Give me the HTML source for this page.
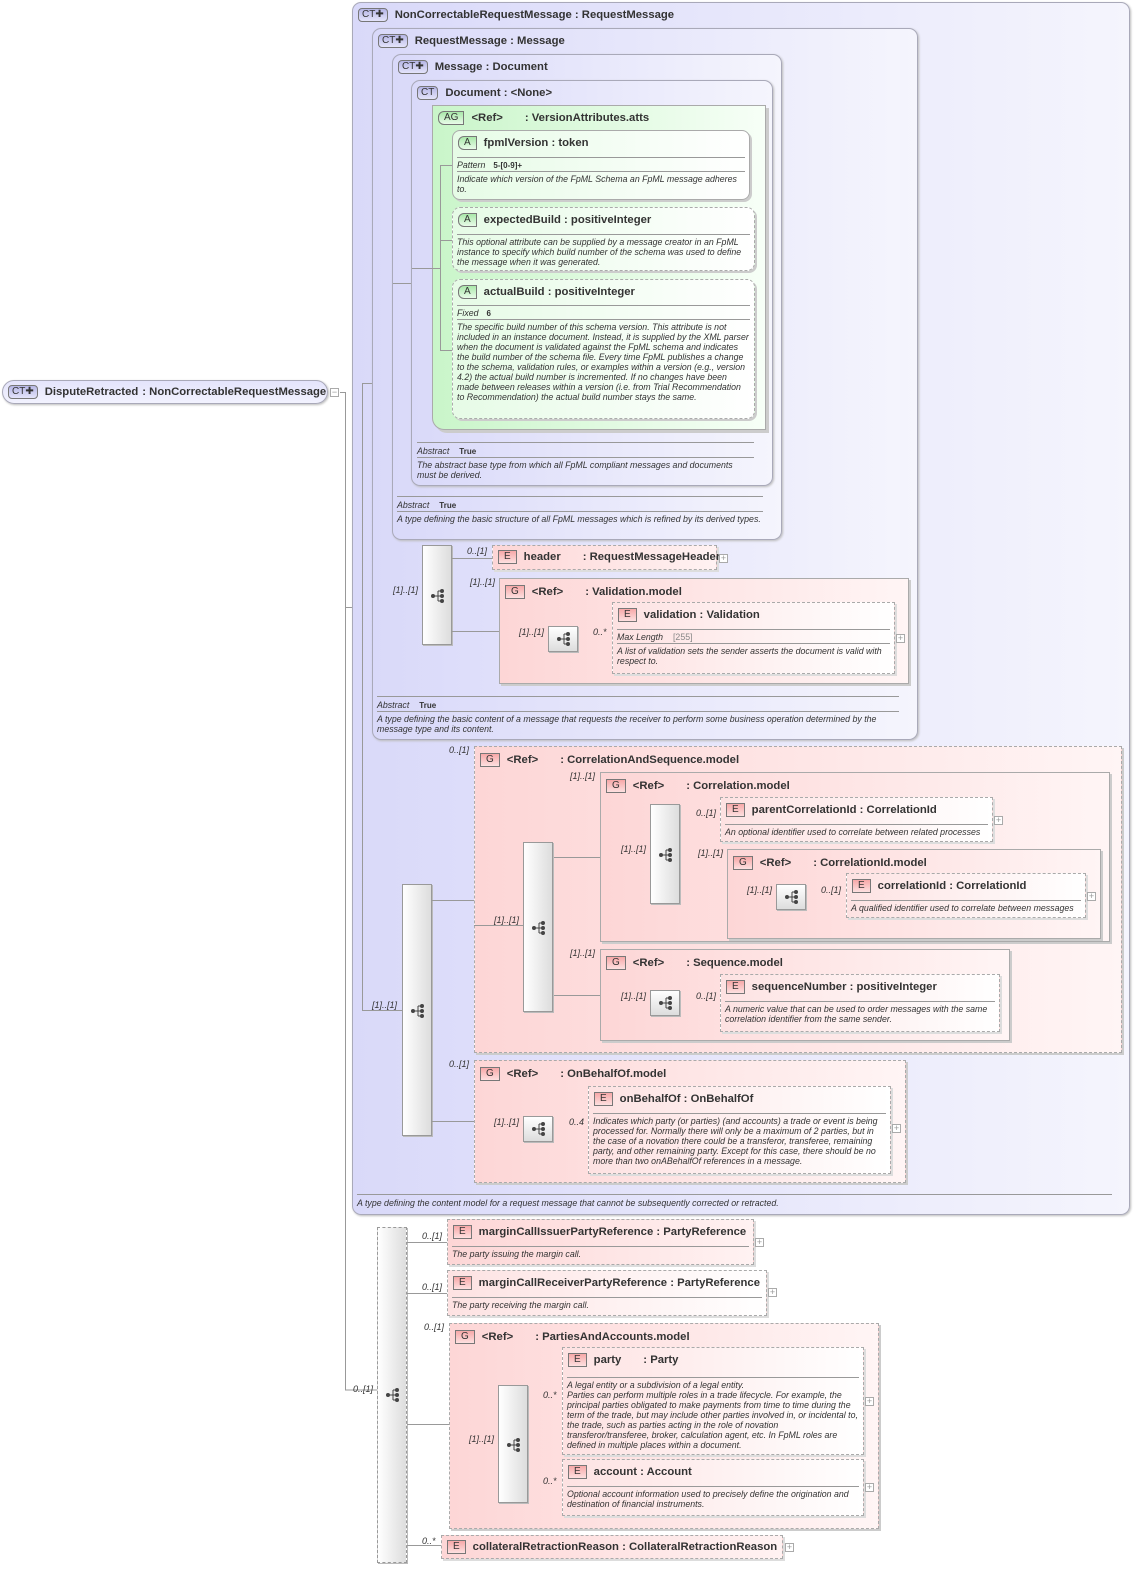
<!DOCTYPE html>
<html><head><meta charset="utf-8"><style>
body{margin:0;width:1139px;height:1575px;background:#fff;position:relative;overflow:hidden;font-family:"Liberation Sans",sans-serif;color:#222}
.b{position:absolute;box-sizing:border-box}
.ct{border:1px solid #a9a9b9;border-radius:9px;background:linear-gradient(90deg,#d9d9f9,#f5f5fd);box-shadow:1px 1px 2px #bbb}
.ag{border:1px solid #aaa;background:linear-gradient(90deg,#c9f5c9,#f7fff7);box-shadow:3px 3px 0 #ccc;border-radius:0 0 0 12px}
.at{border:1px solid #aaa;border-radius:8px;background:linear-gradient(90deg,#e6fbe6,#fff);box-shadow:2px 2px 0 #ccc}
.atd{border:1px dashed #aaa;border-radius:8px;background:linear-gradient(90deg,#e6fbe6,#fff);box-shadow:2px 2px 0 #ccc}
.g{border:1px solid #aaa;background:linear-gradient(90deg,#fdd6d6,#fff5f5);box-shadow:2px 2px 0 #ccc}
.gd{border:1px dashed #aaa;background:linear-gradient(90deg,#fdd6d6,#fff5f5);box-shadow:2px 2px 0 #ccc}
.e{border:1px dashed #aaa;background:linear-gradient(90deg,#fde2e2,#fff);box-shadow:2px 2px 0 #ddd}
.ef{border:1px dashed #aaa;background:linear-gradient(90deg,#fdd6d6,#fff2f2);box-shadow:2px 2px 0 #ddd}
.t{position:absolute;left:5px;top:4px;font-weight:bold;font-size:11.3px;white-space:nowrap;line-height:16px;color:#333}
.bg{display:inline-block;box-sizing:border-box;height:14px;line-height:12px;font-size:10px;font-weight:normal;padding:0 5px;margin-right:7px;vertical-align:middle;border:1px solid #777;background:linear-gradient(#f7a8a8,#fde0e0);color:#333}
.bg.c{border-radius:4px;background:linear-gradient(#b6b6e6,#e4e4fa);padding:0 3px}
.bg.a{border-radius:6px 0 0 6px;background:linear-gradient(#a9e8a9,#e8fbe8)}
.sec{position:absolute;left:4px;right:4px;border-top:1px solid #999;font-style:italic;font-size:8.8px;line-height:10px;padding-top:2px;color:#333}
.sec b{font-style:normal;font-size:8px;margin-left:8px}
.sec .gr{font-style:normal;color:#888;margin-left:10px}
.seq{position:absolute;box-sizing:border-box;border:1px solid #999;background:linear-gradient(90deg,#fff,#ddd);box-shadow:1px 1px 0 #bbb}
.sq{position:absolute;width:30px;height:26px;box-sizing:border-box;border:1px solid #999;background:linear-gradient(#fff,#ddd);box-shadow:1px 1px 0 #bbb}
.l{position:absolute;font-style:italic;font-size:9px;color:#333;white-space:nowrap}
.pl{position:absolute;width:9px;height:9px;box-sizing:border-box;border:1px solid #aaa;background:#fff;font-size:9px;line-height:7px;text-align:center;color:#999}
.ft{position:absolute;border-top:1px solid #999;font-style:italic;font-size:8.8px;line-height:10px;color:#333}
svg.ic{position:absolute}
</style></head><body>
<svg width="0" height="0" style="position:absolute"><defs><g id="si" fill="#444" stroke="#444"><circle cx="3" cy="7" r="2" stroke="none"/><path d="M3 7H8M8 2V12M8 2H12M8 7H12M8 12H12" fill="none" stroke-width="1"/><circle cx="12" cy="2" r="2" stroke="none"/><circle cx="12" cy="7" r="2" stroke="none"/><circle cx="12" cy="12" r="2" stroke="none"/></g></defs></svg>

<svg class="ic" width="1139" height="1575" style="left:0;top:0;z-index:0" fill="none" stroke="#999" stroke-width="1">
<path d="M340 392.5H345.5V1390H377M345 607.5H353"/>
</svg>

<div class="b ct" style="left:2px;top:380px;width:326px;height:24px;border-radius:12px;background:linear-gradient(#e4e4fc,#f2f2fe)"><div class="t" style="top:3px"><span class="bg c">CT✚</span>DisputeRetracted<span style="margin-left:4px">: NonCorrectableRequestMessage</span></div></div>
<div class="pl" style="left:330px;top:388px">−</div>

<div class="b ct" style="left:352px;top:2px;width:778px;height:1213px">
 <div class="t"><span class="bg c">CT✚</span>NonCorrectableRequestMessage : RequestMessage</div>
 <div class="ft" style="left:4px;width:755px;top:1191px;padding-top:3px">A type defining the content model for a request message that cannot be subsequently corrected or retracted.</div>
</div>
<svg class="ic" width="1139" height="1575" style="left:0;top:0" fill="none" stroke="#999">
<path d="M362.5 383V1010.5H402M362 383.5H372"/>
<path d="M380.5 283V595.5H422M380 283.5H392"/>
</svg>

<div class="b ct" style="left:372px;top:28px;width:546px;height:712px">
 <div class="t"><span class="bg c">CT✚</span>RequestMessage : Message</div>
 <div class="ft" style="left:4px;width:522px;top:667px;padding-top:3px"><span>Abstract</span><b style="font-style:normal;font-size:8px;margin-left:10px">True</b></div>
 <div class="ft" style="left:4px;width:522px;top:682px;padding-top:2px">A type defining the basic content of a message that requests the receiver to perform some business operation determined by the message type and its content.</div>
</div>
<div class="b ct" style="left:392px;top:54px;width:390px;height:486px">
 <div class="t"><span class="bg c">CT✚</span>Message : Document</div>
 <div class="ft" style="left:4px;width:366px;top:441px;padding-top:3px">Abstract<b style="font-style:normal;font-size:8px;margin-left:10px">True</b></div>
 <div class="ft" style="left:4px;width:366px;top:456px;padding-top:2px">A type defining the basic structure of all FpML messages which is refined by its derived types.</div>
</div>
<svg class="ic" width="1139" height="1575" style="left:0;top:0" fill="none" stroke="#999">
<path d="M393 283.5H411"/>
</svg>
<div class="b ct" style="left:411px;top:80px;width:362px;height:406px">
 <div class="t"><span class="bg c">CT</span>Document : &lt;None&gt;</div>
 <div class="ft" style="left:5px;width:337px;top:361px;padding-top:3px">Abstract<b style="font-style:normal;font-size:8px;margin-left:10px">True</b></div>
 <div class="ft" style="left:5px;width:337px;top:376px;padding-top:2px">The abstract base type from which all FpML compliant messages and documents must be derived.</div>
</div>
<svg class="ic" width="1139" height="1575" style="left:0;top:0" fill="none" stroke="#999">
<path d="M412 268.5H432"/>
</svg>
<div class="b ag" style="left:432px;top:105px;width:334px;height:325px">
 <div class="t"><span class="bg a">AG</span>&lt;Ref&gt;<span style="margin-left:22px">: VersionAttributes.atts</span></div>
</div>
<svg class="ic" width="1139" height="1575" style="left:0;top:0" fill="none" stroke="#999">
<path d="M432 268.5H440.5M440.5 165V350M440 165.5H452M440 240.5H452M440 350.5H452"/>
</svg>
<div class="b at" style="left:452px;top:130px;width:298px;height:70px">
 <div class="t"><span class="bg a">A</span>fpmlVersion : token</div>
 <div class="sec" style="top:26px">Pattern<b>5-[0-9]+</b></div>
 <div class="sec" style="top:40px">Indicate which version of the FpML Schema an FpML message adheres to.</div>
</div>
<div class="b atd" style="left:452px;top:207px;width:303px;height:64px">
 <div class="t"><span class="bg a">A</span>expectedBuild : positiveInteger</div>
 <div class="sec" style="top:26px">This optional attribute can be supplied by a message creator in an FpML instance to specify which build number of the schema was used to define the message when it was generated.</div>
</div>
<div class="b atd" style="left:452px;top:279px;width:303px;height:140px">
 <div class="t"><span class="bg a">A</span>actualBuild : positiveInteger</div>
 <div class="sec" style="top:25px">Fixed<b>6</b></div>
 <div class="sec" style="top:39px">The specific build number of this schema version. This attribute is not included in an instance document. Instead, it is supplied by the XML parser when the document is validated against the FpML schema and indicates the build number of the schema file. Every time FpML publishes a change to the schema, validation rules, or examples within a version (e.g., version 4.2) the actual build number is incremented. If no changes have been made between releases within a version (i.e. from Trial Recommendation to Recommendation) the actual build number stays the same.</div>
</div>

<div class="seq" style="left:422px;top:545px;width:30px;height:100px"><svg class="ic" width="16" height="14" style="left:7px;top:43px"><use href="#si"/></svg></div>
<div class="l" style="left:393px;top:585px">[1]..[1]</div>
<svg class="ic" width="1139" height="1575" style="left:0;top:0" fill="none" stroke="#999">
<path d="M452 558.5H492M452 631.5H499M578 638.5H612"/>
</svg>
<div class="l" style="left:467px;top:546px">0..[1]</div>
<div class="b ef" style="left:492px;top:545px;width:225px;height:25px"><div class="t" style="top:3px"><span class="bg">E</span>header<span style="margin-left:22px">: RequestMessageHeader</span></div></div>
<div class="pl" style="left:719px;top:554px">+</div>
<div class="l" style="left:470px;top:577px">[1]..[1]</div>
<div class="b g" style="left:499px;top:578px;width:410px;height:106px"><div class="t" style="top:5px"><span class="bg">G</span>&lt;Ref&gt;<span style="margin-left:22px">: Validation.model</span></div></div>
<div class="l" style="left:519px;top:627px">[1]..[1]</div>
<div class="sq" style="left:548px;top:626px"><svg class="ic" width="16" height="14" style="left:7px;top:5px"><use href="#si"/></svg></div>
<div class="l" style="left:593px;top:627px">0..*</div>
<div class="b e" style="left:612px;top:602px;width:283px;height:72px">
 <div class="t"><span class="bg">E</span>validation : Validation</div>
 <div class="sec" style="top:26px">Max Length<span class="gr">[255]</span></div>
 <div class="sec" style="top:40px">A list of validation sets the sender asserts the document is valid with respect to.</div>
</div>
<div class="pl" style="left:896px;top:634px">+</div>

<div class="seq" style="left:402px;top:884px;width:30px;height:252px"><svg class="ic" width="16" height="14" style="left:7px;top:119px"><use href="#si"/></svg></div>
<div class="l" style="left:372px;top:1000px">[1]..[1]</div>
<svg class="ic" width="1139" height="1575" style="left:0;top:0" fill="none" stroke="#999">
<path d="M432 900.5H474M432 1121.5H474"/>
</svg>
<div class="l" style="left:449px;top:745px">0..[1]</div>
<div class="b gd" style="left:474px;top:746px;width:648px;height:307px"><div class="t" style="top:5px"><span class="bg">G</span>&lt;Ref&gt;<span style="margin-left:22px">: CorrelationAndSequence.model</span></div></div>
<svg class="ic" width="1139" height="1575" style="left:0;top:0" fill="none" stroke="#999">
<path d="M474 925.5H523M553 857.5H600M553 995.5H600M600 855.5H650M680 818.5H720M680 889.5H727M806 897.5H846M600 1001.5H650M680 1001.5H720M474 1121.5H523M553 1128.5H588"/>
</svg>
<div class="l" style="left:494px;top:915px">[1]..[1]</div>
<div class="seq" style="left:523px;top:842px;width:30px;height:170px"><svg class="ic" width="16" height="14" style="left:7px;top:78px"><use href="#si"/></svg></div>
<div class="l" style="left:570px;top:771px">[1]..[1]</div>
<div class="b g" style="left:600px;top:772px;width:510px;height:170px"><div class="t" style="top:5px"><span class="bg">G</span>&lt;Ref&gt;<span style="margin-left:22px">: Correlation.model</span></div></div>
<div class="l" style="left:621px;top:844px">[1]..[1]</div>
<div class="seq" style="left:650px;top:804px;width:30px;height:100px"><svg class="ic" width="16" height="14" style="left:7px;top:43px"><use href="#si"/></svg></div>
<div class="l" style="left:696px;top:808px">0..[1]</div>
<div class="b e" style="left:720px;top:797px;width:273px;height:45px">
 <div class="t"><span class="bg">E</span>parentCorrelationId : CorrelationId</div>
 <div class="sec" style="top:26px">An optional identifier used to correlate between related processes</div>
</div>
<div class="pl" style="left:994px;top:816px">+</div>
<div class="l" style="left:698px;top:848px">[1]..[1]</div>
<div class="b g" style="left:727px;top:849px;width:374px;height:90px"><div class="t" style="top:5px"><span class="bg">G</span>&lt;Ref&gt;<span style="margin-left:22px">: CorrelationId.model</span></div></div>
<div class="l" style="left:747px;top:885px">[1]..[1]</div>
<div class="sq" style="left:776px;top:884px"><svg class="ic" width="16" height="14" style="left:7px;top:5px"><use href="#si"/></svg></div>
<div class="l" style="left:821px;top:885px">0..[1]</div>
<div class="b e" style="left:846px;top:873px;width:240px;height:45px">
 <div class="t"><span class="bg">E</span>correlationId : CorrelationId</div>
 <div class="sec" style="top:26px">A qualified identifier used to correlate between messages</div>
</div>
<div class="pl" style="left:1087px;top:892px">+</div>
<div class="l" style="left:570px;top:948px">[1]..[1]</div>
<div class="b g" style="left:600px;top:949px;width:410px;height:92px"><div class="t" style="top:5px"><span class="bg">G</span>&lt;Ref&gt;<span style="margin-left:22px">: Sequence.model</span></div></div>
<div class="l" style="left:621px;top:991px">[1]..[1]</div>
<div class="sq" style="left:650px;top:990px"><svg class="ic" width="16" height="14" style="left:7px;top:5px"><use href="#si"/></svg></div>
<div class="l" style="left:696px;top:991px">0..[1]</div>
<div class="b e" style="left:720px;top:974px;width:280px;height:58px">
 <div class="t"><span class="bg">E</span>sequenceNumber : positiveInteger</div>
 <div class="sec" style="top:26px">A numeric value that can be used to order messages with the same correlation identifier from the same sender.</div>
</div>

<div class="l" style="left:449px;top:1059px">0..[1]</div>
<div class="b gd" style="left:474px;top:1060px;width:432px;height:123px"><div class="t" style="top:5px"><span class="bg">G</span>&lt;Ref&gt;<span style="margin-left:22px">: OnBehalfOf.model</span></div></div>
<div class="l" style="left:494px;top:1117px">[1]..[1]</div>
<div class="sq" style="left:523px;top:1116px"><svg class="ic" width="16" height="14" style="left:7px;top:5px"><use href="#si"/></svg></div>
<div class="l" style="left:569px;top:1117px">0..4</div>
<div class="b e" style="left:588px;top:1086px;width:303px;height:88px">
 <div class="t"><span class="bg">E</span>onBehalfOf : OnBehalfOf</div>
 <div class="sec" style="top:26px">Indicates which party (or parties) (and accounts) a trade or event is being processed for. Normally there will only be a maximum of 2 parties, but in the case of a novation there could be a transferor, transferee, remaining party, and other remaining party. Except for this case, there should be no more than two onABehalfOf references in a message.</div>
</div>
<div class="pl" style="left:892px;top:1124px">+</div>

<div class="seq" style="left:377px;top:1227px;width:30px;height:336px;border-style:dashed"><svg class="ic" width="16" height="14" style="left:7px;top:160px"><use href="#si"/></svg></div>
<div class="l" style="left:353px;top:1384px">0..[1]</div>
<svg class="ic" width="1139" height="1575" style="left:0;top:0" fill="none" stroke="#999">
<path d="M407 1242.5H447M407 1293.5H447M407 1424.5H449M449 1444.5H498M528 1400.5H562M528 1487.5H562M407 1545.5H441"/>
</svg>
<div class="l" style="left:422px;top:1231px">0..[1]</div>
<div class="b ef" style="left:447px;top:1219px;width:307px;height:46px">
 <div class="t"><span class="bg">E</span>marginCallIssuerPartyReference : PartyReference</div>
 <div class="sec" style="top:26px">The party issuing the margin call.</div>
</div>
<div class="pl" style="left:755px;top:1238px">+</div>
<div class="l" style="left:422px;top:1282px">0..[1]</div>
<div class="b e" style="left:447px;top:1270px;width:320px;height:46px">
 <div class="t"><span class="bg">E</span>marginCallReceiverPartyReference : PartyReference</div>
 <div class="sec" style="top:26px">The party receiving the margin call.</div>
</div>
<div class="pl" style="left:768px;top:1288px">+</div>
<div class="l" style="left:424px;top:1322px">0..[1]</div>
<div class="b gd" style="left:449px;top:1323px;width:430px;height:206px"><div class="t" style="top:5px"><span class="bg">G</span>&lt;Ref&gt;<span style="margin-left:22px">: PartiesAndAccounts.model</span></div></div>
<div class="l" style="left:469px;top:1434px">[1]..[1]</div>
<div class="seq" style="left:498px;top:1385px;width:30px;height:118px"><svg class="ic" width="16" height="14" style="left:7px;top:52px"><use href="#si"/></svg></div>
<div class="l" style="left:543px;top:1390px">0..*</div>
<div class="b e" style="left:562px;top:1347px;width:302px;height:108px">
 <div class="t"><span class="bg">E</span>party<span style="margin-left:22px">: Party</span></div>
 <div class="sec" style="top:29px">A legal entity or a subdivision of a legal entity.<br>Parties can perform multiple roles in a trade lifecycle. For example, the principal parties obligated to make payments from time to time during the term of the trade, but may include other parties involved in, or incidental to, the trade, such as parties acting in the role of novation transferor/transferee, broker, calculation agent, etc. In FpML roles are defined in multiple places within a document.</div>
</div>
<div class="pl" style="left:865px;top:1397px">+</div>
<div class="l" style="left:543px;top:1476px">0..*</div>
<div class="b e" style="left:562px;top:1459px;width:302px;height:57px">
 <div class="t"><span class="bg">E</span>account : Account</div>
 <div class="sec" style="top:26px">Optional account information used to precisely define the origination and destination of financial instruments.</div>
</div>
<div class="pl" style="left:865px;top:1483px">+</div>
<div class="l" style="left:422px;top:1536px">0..*</div>
<div class="b ef" style="left:441px;top:1535px;width:342px;height:24px"><div class="t" style="top:3px"><span class="bg">E</span>collateralRetractionReason : CollateralRetractionReason</div></div>
<div class="pl" style="left:785px;top:1543px">+</div>
</body></html>
